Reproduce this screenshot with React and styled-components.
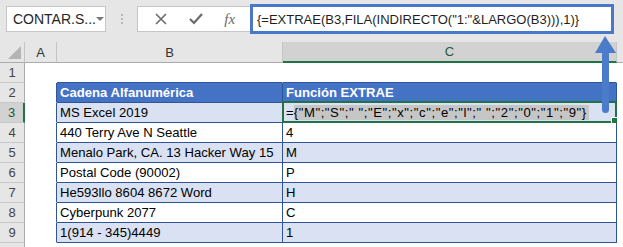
import React from "react";
import styled, { createGlobalStyle } from "styled-components";

const Global = createGlobalStyle`
  html, body { margin: 0; padding: 0; background: #ffffff; }
  body { width: 623px; height: 247px; overflow: hidden; font-family: "Liberation Sans", Arial, sans-serif; }
`;

const Page = styled.div`
  position: relative;
  width: 623px;
  height: 247px;
  background: #ffffff;
  overflow: hidden;
`;

const Toolbar = styled.div`
  display: flex;
  align-items: flex-start;
  height: 42px;
  padding-left: 6px;
  background: #e6e6e6;
  box-sizing: border-box;
`;

const NameBox = styled.div`
  margin-top: 6px;
  width: 100px;
  height: 26px;
  box-sizing: border-box;
  border: 1px solid #c6c6c6;
  background: #ffffff;
  display: flex;
  align-items: center;
  justify-content: space-between;
  padding: 0 8px 0 6px;
  font-size: 14px;
  color: #262626;
`;

const Caret = styled.span`
  width: 0;
  height: 0;
  border-left: 4px solid transparent;
  border-right: 4px solid transparent;
  border-top: 4px solid #7a7a7a;
`;

const Grip = styled.div`
  width: 31px;
  height: 26px;
  margin-top: 6px;
  display: flex;
  flex-direction: column;
  align-items: center;
  justify-content: center;
  gap: 2px;
`;

const Dot = styled.span`
  width: 2px;
  height: 2px;
  background: #b8b8b8;
`;

const IconBox = styled.div`
  margin-top: 6px;
  width: 113px;
  height: 26px;
  box-sizing: border-box;
  border: 1px solid #c6c6c6;
  border-right: none;
  background: #ffffff;
  display: flex;
  align-items: center;
  justify-content: space-around;
  padding: 0 4px 0 6px;
`;

const Fx = styled.span`
  font-family: "Liberation Serif", "Times New Roman", serif;
  font-style: italic;
  font-size: 15px;
  color: #6a6a6a;
`;

const FormulaBox = styled.div`
  margin-top: 4px;
  width: 364px;
  height: 30px;
  box-sizing: border-box;
  border: 3px solid #4a78c8;
  background: #ffffff;
  display: flex;
  align-items: center;
  padding-left: 4px;
  font-size: 13px;
  color: #1f1f1f;
  white-space: nowrap;
  overflow: hidden;
`;

const Sheet = styled.div`
  display: grid;
  grid-template-columns: 25px 32px 226px 334px 1fr;
  grid-auto-rows: 20px;
  grid-template-rows: 21px;
`;

const ColHead = styled.div`
  box-sizing: border-box;
  background: ${(p) => (p.$active ? "#d2d2d2" : "#e6e6e6")};
  border-right: 1px solid ${(p) => (p.$last ? "transparent" : "#c4c4c4")};
  border-bottom: ${(p) => (p.$active ? "2px solid #217346" : "1px solid #ababab")};
  display: flex;
  align-items: center;
  justify-content: center;
  font-size: 13px;
  color: ${(p) => (p.$active ? "#1d5c38" : "#333333")};
  position: relative;
`;

const Corner = styled.span`
  position: absolute;
  right: 3px;
  bottom: 3px;
  width: 0;
  height: 0;
  border-left: 13px solid transparent;
  border-bottom: 13px solid #b4b4b4;
`;

const RowHead = styled.div`
  box-sizing: border-box;
  background: ${(p) => (p.$active ? "#d2d2d2" : "#e6e6e6")};
  border-right: ${(p) => (p.$active ? "2px solid #217346" : "1px solid #ababab")};
  border-bottom: 1px solid #c8c8c8;
  display: flex;
  align-items: center;
  justify-content: center;
  font-size: 13px;
  color: ${(p) => (p.$active ? "#1d5c38" : "#444444")};
`;

const Cell = styled.div`
  box-sizing: border-box;
  background: ${(p) =>
    p.$kind === "head" ? "#4472c4" : p.$kind === "band" ? "#d9e1f2" : "#ffffff"};
  color: ${(p) => (p.$kind === "head" ? "#ffffff" : "#000000")};
  font-weight: ${(p) => (p.$kind === "head" ? 700 : 400)};
  border-right: 1px solid ${(p) => (p.$edge ? "#2f5597" : "transparent")};
  border-bottom: 1px solid ${(p) => (p.$under ? "#2f5597" : "transparent")};
  display: flex;
  align-items: center;
  padding-left: 3px;
  font-size: 13.1px;
  white-space: nowrap;
  overflow: visible;
  position: relative;
`;

const Selection = styled.span`
  position: absolute;
  left: -1px;
  top: -2px;
  right: -1px;
  bottom: -1px;
  border: 2px solid #217346;
  pointer-events: none;
`;

const Handle = styled.span`
  position: absolute;
  right: -3px;
  bottom: -3px;
  width: 5px;
  height: 5px;
  background: #217346;
  border: 1px solid #ffffff;
`;

const Hi = styled.span`
  background: #c6c6c6;
  letter-spacing: 0.6px;
  padding-right: 2px;
`;

const Arrow = styled.svg`
  position: absolute;
  left: 594px;
  top: 35px;
`;

const rows = [
  ["MS Excel 2019", null],
  ["440 Terry Ave N Seattle", "4"],
  ["Menalo Park, CA. 13 Hacker Way 15", "M"],
  ["Postal Code (90002)", "P"],
  ["He593llo 8604 8672 Word", "H"],
  ["Cyberpunk 2077", "C"],
  ["1(914 - 345)4449", "1"],
];

export default function App() {
  return (
    <Page>
      <Global />
      <Toolbar>
        <NameBox>
          <span>CONTAR.S...</span>
          <Caret />
        </NameBox>
        <Grip>
          <Dot />
          <Dot />
          <Dot />
        </Grip>
        <IconBox>
          <svg width="12" height="12" viewBox="0 0 12 12">
            <path d="M1 1 L11 11 M11 1 L1 11" stroke="#6a6a6a" strokeWidth="1.6" fill="none" />
          </svg>
          <svg width="14" height="12" viewBox="0 0 14 12">
            <path d="M1 6 L5 10 L13 1" stroke="#6a6a6a" strokeWidth="2.2" fill="none" />
          </svg>
          <Fx>fx</Fx>
        </IconBox>
        <FormulaBox>{'{=EXTRAE(B3,FILA(INDIRECTO("1:"&LARGO(B3))),1)}'}</FormulaBox>
      </Toolbar>
      <Sheet>
        <ColHead>
          <Corner />
        </ColHead>
        <ColHead>A</ColHead>
        <ColHead>B</ColHead>
        <ColHead $active>C</ColHead>
        <ColHead $last />

        <RowHead>1</RowHead>
        <Cell />
        <Cell $under />
        <Cell $under />
        <Cell />

        <RowHead>2</RowHead>
        <Cell $edge />
        <Cell $kind="head" $edge $under>Cadena Alfanumérica</Cell>
        <Cell $kind="head" $edge $under>Función EXTRAE</Cell>
        <Cell />

        {rows.map(([b, c], i) => {
          const kind = i % 2 === 0 ? "band" : "plain";
          const n = i + 3;
          return (
            <React.Fragment key={n}>
              <RowHead $active={n === 3}>{n}</RowHead>
              <Cell $edge />
              <Cell $kind={kind} $edge $under>{b}</Cell>
              <Cell $kind={kind} $edge $under>
                {n === 3 ? (
                  <>
                    =<Hi>{'{"M";"S";" ";"E";"x";"c";"e";"l";" ";"2";"0";"1";"9"}'}</Hi>
                    <Selection>
                      <Handle />
                    </Selection>
                  </>
                ) : (
                  c
                )}
              </Cell>
              <Cell />
            </React.Fragment>
          );
        })}
        <RowHead />
      </Sheet>
      <Arrow width="24" height="82" viewBox="0 0 24 82">
        <polygon points="11,1 1,18 22,18" fill="#4a7cc9" />
        <rect x="8" y="16" width="7" height="62" rx="3.5" fill="#4a7cc9" />
      </Arrow>
    </Page>
  );
}
